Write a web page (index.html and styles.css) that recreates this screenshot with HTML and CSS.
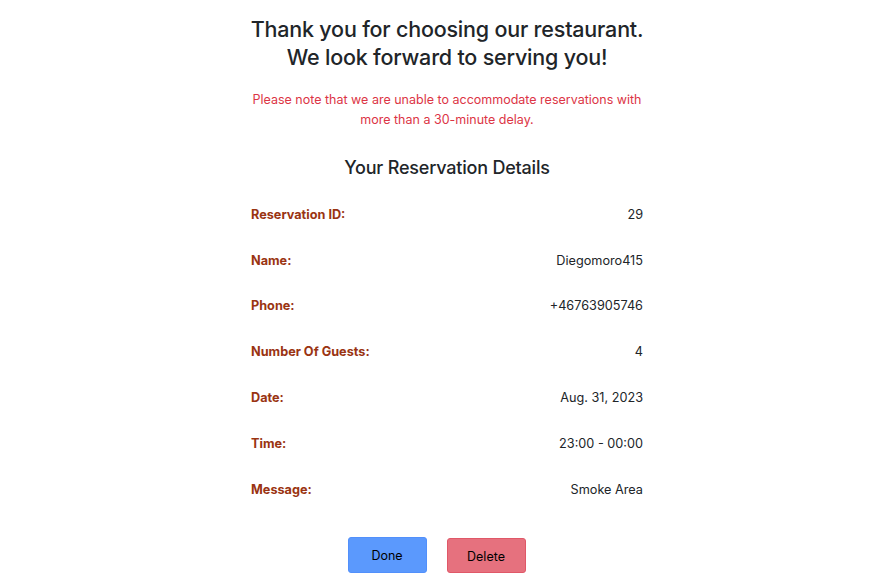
FILE: index.html
```html
<!DOCTYPE html>
<html lang="en">
<head>
<meta charset="utf-8">
<title>Reservation Details</title>
<link rel="stylesheet" href="styles.css">
</head>
<body>
<main class="page">
  <section class="content">
    <h1 class="title">Thank you for choosing our restaurant.<br>We look forward to serving you!</h1>
    <p class="note">Please note that we are unable to accommodate reservations with more than a 30-minute delay.</p>
    <h2 class="subtitle">Your Reservation Details</h2>
    <dl class="details">
      <div class="row"><dt>Reservation ID:</dt><dd>29</dd></div>
      <div class="row"><dt>Name:</dt><dd>Diegomoro415</dd></div>
      <div class="row"><dt>Phone:</dt><dd>+46763905746</dd></div>
      <div class="row"><dt>Number Of Guests:</dt><dd>4</dd></div>
      <div class="row"><dt>Date:</dt><dd>Aug. 31, 2023</dd></div>
      <div class="row"><dt>Time:</dt><dd>23:00 - 00:00</dd></div>
      <div class="row"><dt>Message:</dt><dd>Smoke Area</dd></div>
    </dl>
  </section>
  <div class="actions">
    <button class="btn btn-done" type="button">Done</button>
    <button class="btn btn-delete" type="button">Delete</button>
  </div>
</main>
</body>
</html>
```
FILE: styles.css
```css
* { box-sizing: border-box; }
html, body { margin: 0; padding: 0; background: #fff; }
body {
  font-family: Inter, "Noto Sans", "Liberation Sans", sans-serif;
  color: #212529;
}
.page { width: 875px; }
.content {
  width: 400px;
  margin-left: 247px;
  padding-top: 16px;
}
.title {
  margin: 0;
  font-size: 21.5px;
  font-weight: 500;
  line-height: 27.5px;
  text-align: center;
  letter-spacing: -0.2px;
}
.note {
  margin: 18.5px 0 0;
  font-size: 12.5px;
  line-height: 20px;
  color: #dc3545;
  text-align: center;
}
.subtitle {
  margin: 26px 0 0;
  font-size: 18px;
  font-weight: 500;
  line-height: 24px;
  text-align: center;
  letter-spacing: -0.2px;
}
.details {
  margin: 12px 0 0;
  padding: 0 4px;
}
.row {
  display: flex;
  justify-content: space-between;
  align-items: center;
  height: 45.8px;
  font-size: 12.7px;
}
.row dt {
  font-weight: 700;
  color: #9a3412;
}
.row dd { margin: 0; color: #212529; }
.actions {
  display: flex;
  justify-content: center;
  align-items: flex-start;
  gap: 20px;
  margin-top: 25px;
  padding-right: 2px;
}
.btn {
  width: 79px;
  height: 36px;
  border-radius: 3px;
  font-family: Inter, "Noto Sans", "Liberation Sans", sans-serif;
  font-size: 12.5px;
  color: #000;
  cursor: pointer;
}
.btn-done {
  background: #5b99fd;
  border: 1px solid #5290fb;
}
.btn-delete {
  margin-top: 1px;
  height: 35px;
  padding-top: 3px;
  background: #e6717e;
  border: 1px solid #e05868;
}
```
